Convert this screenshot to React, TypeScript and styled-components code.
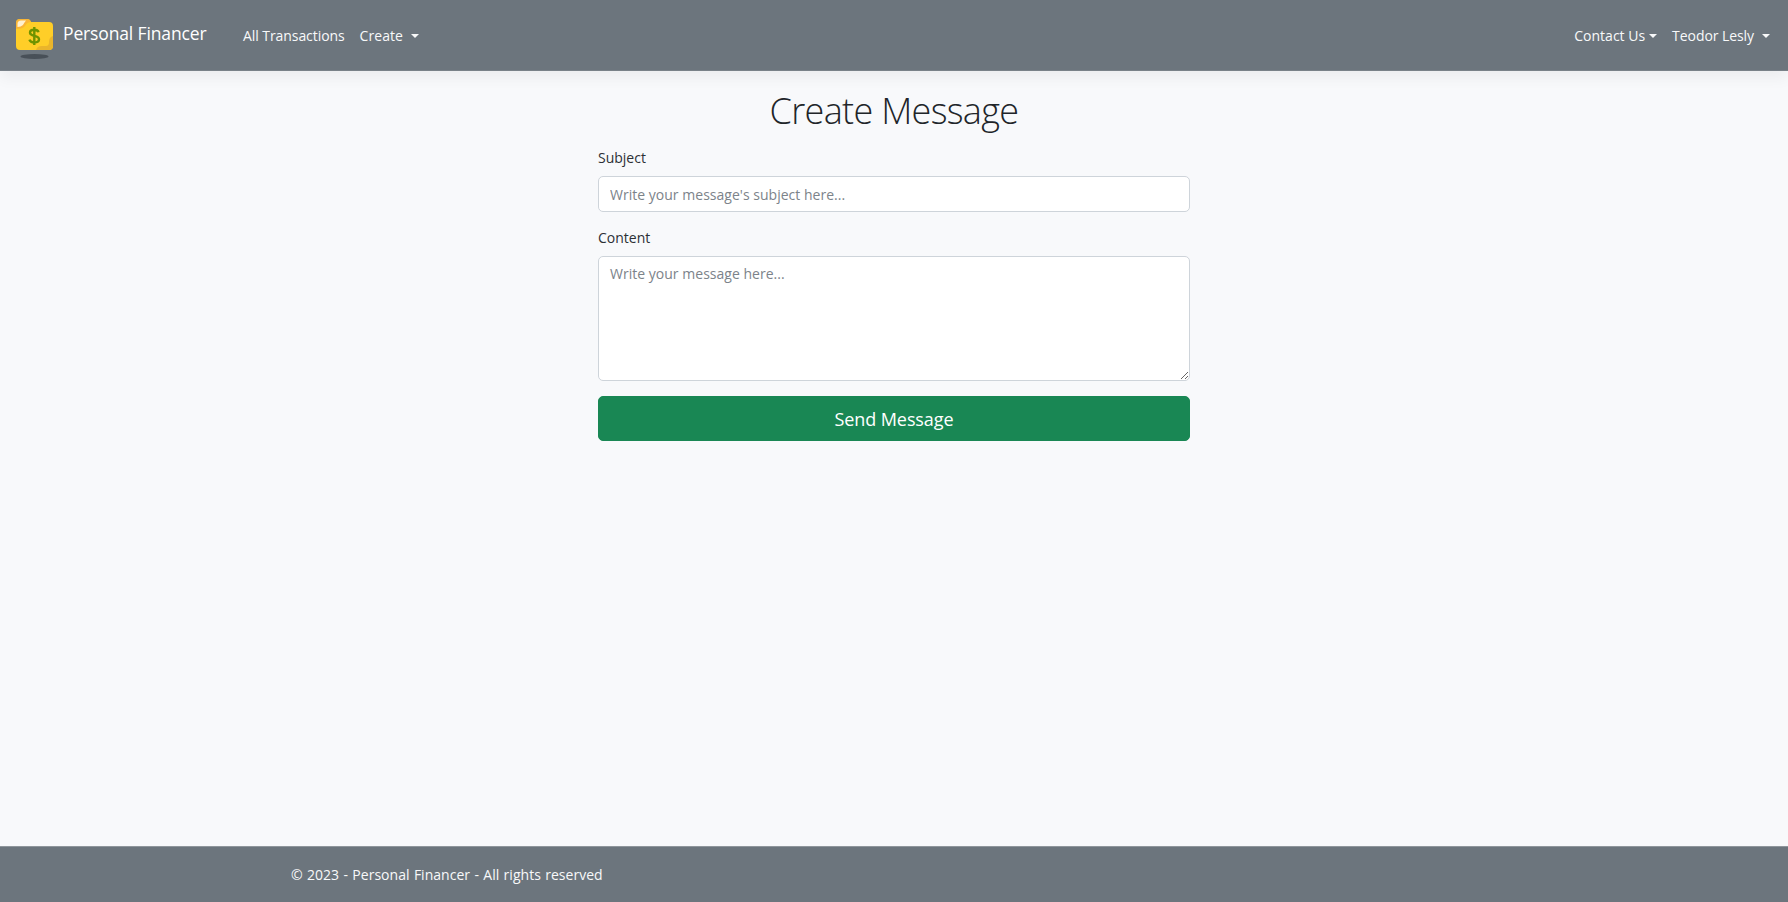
import React from 'react';
import styled, { createGlobalStyle } from 'styled-components';

const GlobalStyle = createGlobalStyle`
  *, *::before, *::after { box-sizing: border-box; }
  html, body { margin: 0; padding: 0; }
  body {
    background: #f8f9fb;
    color: #212529;
    font-family: 'Open Sans', 'Noto Sans', sans-serif;
    font-size: 14px;
    line-height: 22px;
  }
`;

const Page = styled.div`
  display: flex;
  flex-direction: column;
  height: 902px;
  overflow: hidden;
`;

const Header = styled.header`
  display: flex;
  flex: none;
  align-items: center;
  height: 71px;
  padding: 0 18px 0 15px;
  background: #6c757d;
  border-bottom: 1px solid #798188;
  box-shadow: 0 7px 14px rgba(0, 0, 0, 0.05);
`;

const Brand = styled.a`
  display: flex;
  align-items: center;
  width: 228px;
  gap: 9px;
  color: #fff;
  text-decoration: none;
`;

const LogoImage = styled.svg`
  flex: none;
  width: 39px;
  height: 42px;
  margin-top: 8px;
`;

const BrandName = styled.span`
  padding-bottom: 5px;
  font-size: 17.5px;
  line-height: 26px;
  letter-spacing: -0.14px;
  white-space: nowrap;
`;

const Menu = styled.nav<{ $end?: boolean }>`
  display: flex;
  gap: 15px;
  padding-top: 2px;
  margin-left: ${(p) => (p.$end ? 'auto' : '0')};
`;

const MenuLink = styled.a<{ $gap?: number; $spacing?: number }>`
  display: flex;
  align-items: center;
  gap: ${(p) => p.$gap ?? 0}px;
  color: #f8f9fa;
  letter-spacing: ${(p) => p.$spacing ?? -0.07}px;
  text-decoration: none;
  white-space: nowrap;
`;

const Caret = styled.span`
  border: 4px solid transparent;
  border-top-color: #f8f9fa;
  border-bottom: 0;
`;

const Main = styled.main`
  flex: 1;
  width: 592px;
  margin: 0 auto;
`;

const Title = styled.h1`
  margin: 17px 0 14px;
  font-size: 36px;
  font-weight: 300;
  line-height: 45px;
  letter-spacing: -0.68px;
  text-align: center;
  white-space: nowrap;
`;

const Label = styled.label`
  display: block;
  margin-bottom: 7px;
  color: #2c3035;
  letter-spacing: 0;
`;

const Input = styled.input`
  display: block;
  width: 100%;
  height: 36px;
  margin-bottom: 15px;
  padding: 5px 11px;
  border: 1px solid #ced4da;
  border-radius: 5px;
  background: #fff;
  font: inherit;
  letter-spacing: 0.02px;
  outline: none;
  &::placeholder { color: #7c838a; opacity: 1; }
`;

const TextArea = styled(Input)`
  height: 125px;
  padding-top: 6px;
  resize: vertical;
`;

const SendButton = styled.button`
  display: block;
  width: 100%;
  height: 45px;
  padding: 0;
  border: 1px solid #198754;
  border-radius: 5px;
  background: #198754;
  color: #fff;
  font: inherit;
  font-size: 18px;
  letter-spacing: -0.1px;
`;

const Footer = styled.footer`
  flex: none;
  height: 56px;
  padding: 17px 0 0 291px;
  border-top: 1px solid #8f969c;
  background: #6c757d;
  color: #f8f9fa;
  letter-spacing: 0.02px;
  word-spacing: 0.7px;
`;

const FolderLogo = () => (
  <LogoImage viewBox="0 0 39 42">
    <ellipse cx="19.5" cy="38.5" rx="14" ry="2.4" fill="#485058" />
    <path d="M1 5Q1 1 5 1H12Q15 1 16 4H34Q38 4 38 8V28Q38 32 34 32H5Q1 32 1 28Z" fill="#ffce28" />
    <path d="M1 11V5Q1 1 5 1H12Q15 1 16 4Q12 4 10 8Q8 11 1 11Z" fill="#f9b536" />
    <path d="M2.5 9V6Q2.5 2.5 6 2.5H11Q9 5 8 7Q6 9 2.5 9Z" fill="#fff0cf" />
    <path d="M38 18V28Q38 32 34 32H21Q22 28 27 28H31Q34 28 34 24Q34 19 38 18Z" fill="#eab52b" />
    <path d="M23.5 14.2C23 12.4 21.4 11.8 19.2 11.8C16.6 11.8 15 12.8 15 14.8C15 18.9 24 17 24 21.2C24 23.3 22.1 24.4 19.4 24.4C17 24.4 15 23.4 14.4 21.6M19.3 9V27" fill="none" stroke="#6f9300" strokeWidth="2.4" />
  </LogoImage>
);

export default function App() {
  return (
    <Page>
      <GlobalStyle />
      <Header>
        <Brand>
          <FolderLogo />
          <BrandName>Personal Financer</BrandName>
        </Brand>
        <Menu>
          <MenuLink>All Transactions</MenuLink>
          <MenuLink $gap={8} $spacing={0.05}>Create<Caret /></MenuLink>
        </Menu>
        <Menu $end>
          <MenuLink $gap={4} $spacing={0}>Contact Us<Caret /></MenuLink>
          <MenuLink $gap={8}>Teodor Lesly<Caret /></MenuLink>
        </Menu>
      </Header>
      <Main>
        <Title>Create Message</Title>
        <Label htmlFor="subject">Subject</Label>
        <Input id="subject" placeholder="Write your message's subject here..." />
        <Label htmlFor="content">Content</Label>
        <TextArea as="textarea" id="content" placeholder="Write your message here..." />
        <SendButton>Send Message</SendButton>
      </Main>
      <Footer>© 2023 - Personal Financer - All rights reserved</Footer>
    </Page>
  );
}
